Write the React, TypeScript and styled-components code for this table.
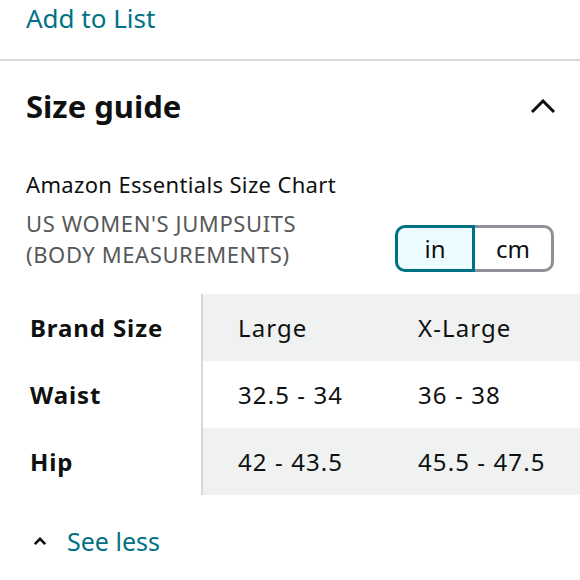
import React from "react";
import styled, { createGlobalStyle } from "styled-components";

const Global = createGlobalStyle`
  html, body { margin: 0; padding: 0; background: #fff; }
  body { font-family: "Noto Sans", "Open Sans", sans-serif; color: #0f1111; }
`;

const Page = styled.div`
  width: 580px;
  height: 580px;
  overflow: hidden;
`;

const TopLink = styled.div`
  box-sizing: border-box;
  height: 59px;
  padding-left: 26px;
  font-size: 26px;
  line-height: 37px;
  color: #007185;
`;

const Divider = styled.div`
  height: 2px;
  background: #d5d9d9;
`;

const Header = styled.div`
  display: flex;
  align-items: center;
  justify-content: space-between;
  padding: 0 24px 0 26px;
  height: 90px;
`;

const Title = styled.h2`
  margin: 0;
  font-size: 31px;
  font-weight: 700;
`;

const Body = styled.div`
  padding: 18px 26px 0 26px;
`;

const ChartName = styled.div`
  font-size: 22px;
  line-height: 30px;
  letter-spacing: 0.35px;
`;

const SubRow = styled.div`
  display: flex;
  align-items: flex-start;
  justify-content: space-between;
  margin-top: 9px;
`;

const SubTitle = styled.div`
  font-size: 22px;
  line-height: 31px;
  letter-spacing: 0.6px;
  color: #565959;
`;

const Toggle = styled.div`
  display: flex;
  height: 47px;
  margin-top: 17px;
`;

const Seg = styled.div<{ $active?: boolean; $first?: boolean }>`
  width: ${(p) => (p.$first ? 80 : 79)}px;
  box-sizing: border-box;
  display: flex;
  align-items: center;
  justify-content: center;
  font-size: 24px;
  color: #0f1111;
  border: 3px solid ${(p) => (p.$active ? "#007185" : "#8d9096")};
  ${(p) =>
    p.$first
      ? "border-radius: 10px 0 0 10px;"
      : "border-radius: 0 10px 10px 0; border-left: none;"}
  background: ${(p) => (p.$active ? "#edfdff" : "#fff")};
`;

const Table = styled.div`
  margin-top: 22px;
  display: grid;
  grid-template-columns: 203px 1fr;
`;

const LabelCol = styled.div`
  border-right: 2px solid #d5d9d9;
  display: grid;
  grid-auto-rows: 67px;
`;

const Label = styled.div`
  display: flex;
  align-items: center;
  padding-left: 30px;
  font-size: 24px;
  font-weight: 700;
  letter-spacing: 0.9px;
`;

const DataCol = styled.div`
  display: grid;
  grid-auto-rows: 67px;
`;

const DataRow = styled.div<{ $shade?: boolean }>`
  display: grid;
  grid-template-columns: 180px 1fr;
  align-items: center;
  padding-left: 35px;
  background: ${(p) => (p.$shade ? "#f0f2f2" : "#fff")};
  font-size: 24px;
  letter-spacing: 1.1px;
`;

const SeeLess = styled.div`
  display: flex;
  align-items: center;
  gap: 20px;
  padding-left: 33px;
  height: 92px;
  font-size: 25px;
  color: #007185;
`;

const Chevron = ({ w, h, stroke }: { w: number; h: number; stroke: number }) => (
  <svg width={w} height={h} viewBox={`0 0 ${w} ${h}`} fill="none">
    <path
      d={`M${stroke / 2 + 0.5} ${h - stroke / 2 - 0.5} L${w / 2} ${stroke / 2 + 0.5} L${w - stroke / 2 - 0.5} ${h - stroke / 2 - 0.5}`}
      stroke="#0f1111"
      strokeWidth={stroke}
    />
  </svg>
);

const rows = [
  { label: "Brand Size", a: "Large", b: "X-Large", shade: true },
  { label: "Waist", a: "32.5 - 34", b: "36 - 38", shade: false },
  { label: "Hip", a: "42 - 43.5", b: "45.5 - 47.5", shade: true },
];

export default function App() {
  return (
    <Page>
      <Global />
      <TopLink>Add to List</TopLink>
      <Divider />
      <Header>
        <Title>Size guide</Title>
        <Chevron w={26} h={15} stroke={3} />
      </Header>
      <Body>
        <ChartName>Amazon Essentials Size Chart</ChartName>
        <SubRow>
          <SubTitle>
            US WOMEN'S JUMPSUITS
            <br />
            (BODY MEASUREMENTS)
          </SubTitle>
          <Toggle>
            <Seg $active $first>
              in
            </Seg>
            <Seg>cm</Seg>
          </Toggle>
        </SubRow>
      </Body>
      <Table>
        <LabelCol>
          {rows.map((r) => (
            <Label key={r.label}>{r.label}</Label>
          ))}
        </LabelCol>
        <DataCol>
          {rows.map((r) => (
            <DataRow key={r.label} $shade={r.shade}>
              <span>{r.a}</span>
              <span>{r.b}</span>
            </DataRow>
          ))}
        </DataCol>
      </Table>
      <SeeLess>
        <Chevron w={14} h={9} stroke={2.6} />
        <span>See less</span>
      </SeeLess>
    </Page>
  );
}
